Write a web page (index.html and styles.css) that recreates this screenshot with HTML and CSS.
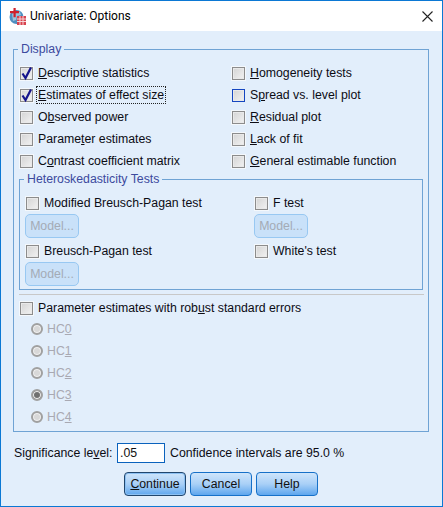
FILE: index.html
```html
<!DOCTYPE html>
<html lang="en">
<head>
    <meta charset="UTF-8">
    <title>Univariate: Options</title>
    <link rel="stylesheet" href="styles.css">
</head>
<body>
    <div class="window">
        <div class="title-bar">
            <svg class="app-icon" width="17" height="17" viewBox="0 0 17 17">
                <circle cx="7.5" cy="9" r="7" fill="#4f8fc0"/>
                <path d="M3 6c2-2 5-3 8-2l1 3-4 1-1 4-3 1z" fill="#9cc4dc"/>
                <path d="M4.500 0h2.200v3h3.300v2.200h-3.300v4h-2.200v-4h-3.500v-2.200h3.500z" fill="#d0202c"/>
                <rect x="8" y="8" width="9" height="9" fill="#d8434f"/>
                <path d="M8 11h9M8 13.500h9M11 8v9M14 8v9" stroke="#f6d6d8" stroke-width="1"/>
            </svg>
            <span class="title-text">Univariate: Options</span>
            <svg class="close-icon" width="11" height="11" viewBox="0 0 11 11">
                <path d="M.5.500l10 10M10.500.500l-10 10" stroke="#222" stroke-width="1.100" fill="none"/>
            </svg>
        </div>

        <div class="content">
            <fieldset class="group display-group">
                <legend>Display</legend>

                <div class="display-grid">
                    <div class="check-row"><span class="box checked"><svg width="14" height="14" viewBox="0 0 14 14"><path d="M2.500 6.500l3 4.500L11 0.500" stroke="#14148c" stroke-width="2.200" fill="none"/></svg></span><label><u>D</u>escriptive statistics</label></div>
                    <div class="check-row"><span class="box"></span><label><u>H</u>omogeneity tests</label></div>
                    <div class="check-row"><span class="box checked"><svg width="14" height="14" viewBox="0 0 14 14"><path d="M2.500 6.500l3 4.500L11 0.500" stroke="#14148c" stroke-width="2.200" fill="none"/></svg></span><label class="focused"><u>E</u>stimates of effect size</label></div>
                    <div class="check-row"><span class="box hover"></span><label>S<u>p</u>read vs. level plot</label></div>
                    <div class="check-row"><span class="box"></span><label>O<u>b</u>served power</label></div>
                    <div class="check-row"><span class="box"></span><label><u>R</u>esidual plot</label></div>
                    <div class="check-row"><span class="box"></span><label>Parame<u>t</u>er estimates</label></div>
                    <div class="check-row"><span class="box"></span><label><u>L</u>ack of fit</label></div>
                    <div class="check-row"><span class="box"></span><label>C<u>o</u>ntrast coefficient matrix</label></div>
                    <div class="check-row"><span class="box"></span><label><u>G</u>eneral estimable function</label></div>
                </div>

                <fieldset class="group hetero-group">
                    <legend>Heteroskedasticity Tests</legend>
                    <div class="hetero-grid">
                        <div class="test-col">
                            <div class="check-row"><span class="box"></span><label>Modified Breusch-Pagan test</label></div>
                            <button class="model-btn" disabled>Model...</button>
                            <div class="check-row second"><span class="box"></span><label>Breusch-Pagan test</label></div>
                            <button class="model-btn" disabled>Model...</button>
                        </div>
                        <div class="test-col">
                            <div class="check-row"><span class="box"></span><label>F test</label></div>
                            <button class="model-btn" disabled>Model...</button>
                            <div class="check-row second"><span class="box"></span><label>White's test</label></div>
                        </div>
                    </div>
                </fieldset>

                <div class="separator"></div>

                <div class="check-row"><span class="box"></span><label>Parameter estimates with rob<u>u</u>st standard errors</label></div>
                <div class="radio-list">
                    <div class="radio-row"><span class="radio"></span><label>HC<u>0</u></label></div>
                    <div class="radio-row"><span class="radio"></span><label>HC<u>1</u></label></div>
                    <div class="radio-row"><span class="radio"></span><label>HC<u>2</u></label></div>
                    <div class="radio-row"><span class="radio selected"></span><label>HC<u>3</u></label></div>
                    <div class="radio-row"><span class="radio"></span><label>HC<u>4</u></label></div>
                </div>
            </fieldset>

            <div class="level-row">
                <label class="level-label">Significance le<u>v</u>el:</label>
                <input class="level-input" type="text" value=".05">
                <span>Confidence intervals are 95.0 %</span>
            </div>

            <div class="button-row">
                <button class="action-btn default-btn"><u>C</u>ontinue</button>
                <button class="action-btn">Cancel</button>
                <button class="action-btn">Help</button>
            </div>
        </div>
    </div>
</body>
</html>
```

FILE: styles.css
```css
* {
    box-sizing: border-box;
}

html, body {
    margin: 0;
    height: 100%;
}

body {
    font-family: "Liberation Sans", Arial, sans-serif;
    font-size: 12.3px;
    line-height: 14px;
    color: #0c0c14;
}

.window {
    width: 443px;
    height: 507px;
    border: 1px solid #0b78d4;
    background: #e2eefb;
    display: flex;
    flex-direction: column;
}

.title-bar {
    height: 30px;
    flex: none;
    background: white;
    display: flex;
    align-items: center;
    padding: 0 9px 0 8px;
}

.title-text {
    font-family: Roboto, sans-serif;
    font-size: 12px;
    color: #000;
    margin-left: 4px;
    flex: 1;
}

.content {
    padding: 11px 13px 0 12px;
}

.group {
    margin: 0;
    padding: 0;
    border: 1px solid #6fa3d4;
    min-width: 0;
}

.group legend {
    margin-left: 4px;
    padding: 0 3px;
    color: #3c4a9e;
}

.display-group {
    padding: 6px 0 3px;
}

.display-grid {
    display: grid;
    grid-template-columns: 212px 1fr;
    padding-left: 6px;
}

.check-row {
    height: 22px;
    display: flex;
    align-items: center;
}

.check-row label {
    margin-left: 5px;
    white-space: nowrap;
}

.display-group > .check-row {
    padding-left: 6px;
}

.box {
    width: 13px;
    height: 13px;
    flex: none;
    position: relative;
    border: 1px solid #8c8c8c;
    outline: 1px solid #f4f8fc;
    background: linear-gradient(135deg, #d4d4d4, #f2f2f2);
    box-shadow: inset 0 0 0 1px #e9e9e9;
}

.box.hover {
    border-color: #1546c0;
    outline-color: #e2eefb;
}

.box svg {
    position: absolute;
    left: -1px;
    top: -1px;
}

.focused {
    outline: 1px dotted #222;
    outline-offset: 1px;
}

.hetero-group {
    margin: 0 5px;
    padding: 6px 0 3px;
}

.hetero-group legend {
    margin-left: 4px;
}

.hetero-grid {
    display: grid;
    grid-template-columns: 229px 1fr;
    padding-left: 6px;
}

.test-col {
    display: flex;
    flex-direction: column;
    align-items: flex-start;
}

.check-row.second {
    margin-top: 2px;
}

.model-btn {
    width: 54px;
    height: 24px;
    margin-left: -1px;
    padding: 0;
    font: inherit;
    color: #a4abb6;
    background: #c9e1f9;
    border: 1px solid #98c8f2;
    border-radius: 5px;
}

.separator {
    height: 1px;
    margin: 4px 4px 2px 5px;
    background: #c8c8c8;
}

.radio-list {
    padding-left: 17px;
    margin-top: -1px;
}

.radio-row {
    height: 22px;
    display: flex;
    align-items: center;
    color: #a9a9b2;
}

.radio-row label {
    margin-left: 4px;
}

.radio {
    width: 12px;
    height: 12px;
    flex: none;
    border-radius: 50%;
    border: 2px solid #a0a0a0;
    background: #d8d8d8;
    box-shadow: inset 0 0 0 1px #f0f0f0;
}

.radio.selected {
    background: #707070;
}

.level-row {
    display: flex;
    align-items: center;
    margin-top: 11px;
    padding-left: 1px;
}

.level-label {
    width: 103px;
    white-space: nowrap;
}

.level-input {
    width: 48px;
    height: 20px;
    margin: 0 5px 0 0;
    padding: 0 2px;
    font: inherit;
    color: #111;
    background: white;
    border: 1px solid #0a62bd;
    border-radius: 0;
}

.button-row {
    display: flex;
    justify-content: center;
    gap: 4px;
    margin-top: 9px;
}

.action-btn {
    width: 62px;
    height: 24px;
    padding: 0;
    font: inherit;
    color: #111;
    background: linear-gradient(#cfe5fb, #a9d0f7 50%, #5ea6ee);
    border: 1px solid #1670c8;
    border-radius: 4px;
}

.default-btn {
    border-color: #20466e;
    box-shadow: inset 0 0 0 1px #8cc0f2;
}
```
